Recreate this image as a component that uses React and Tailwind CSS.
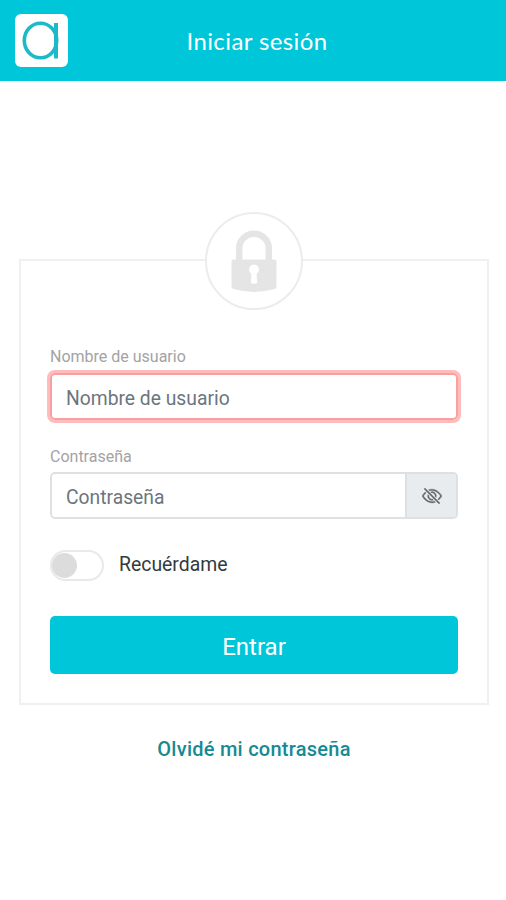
import { useState } from 'react';
import { BsEyeSlash, BsEye } from 'react-icons/bs';

function Logo() {
  return (
    <div className="w-[53px] h-[53px] bg-white rounded-[6px]">
      <svg viewBox="0 0 53 53" className="w-full h-full" fill="none" stroke="#1cb9c9">
        <ellipse cx="25.5" cy="26.5" rx="16.2" ry="17.3" strokeWidth="3.6" />
        <path d="M41 9V44.5" strokeWidth="4" />
      </svg>
    </div>
  );
}

function LockBadge() {
  return (
    <div className="absolute left-1/2 -top-[49px] -translate-x-1/2 w-[98px] h-[98px] rounded-full bg-white border-2 border-[#ececec]">
      <svg viewBox="0 0 94 94" className="w-full h-full">
        <path
          d="M32.2 50V34.5a14.8 14.8 0 0 1 29.6 0V50"
          fill="none"
          stroke="#e5e5e5"
          strokeWidth="6.5"
        />
        <path
          d="M26.500 45.500h41a2 2 0 0 1 2 2v25q0 2-2 2.600Q47 81 26.500 75.100q-2-.6-2-2.600v-25a2 2 0 0 1 2-2z"
          fill="#e5e5e5"
        />
        <path
          d="M47 50.500a5 5 0 0 1 2.600 9.200l.6 9.300q-3.200 1.600-6.400 0l.6-9.300A5 5 0 0 1 47 50.500z"
          fill="#fff"
        />
      </svg>
    </div>
  );
}

export default function App() {
  const [username, setUsername] = useState('');
  const [password, setPassword] = useState('');
  const [visible, setVisible] = useState(false);
  const [remember, setRemember] = useState(false);

  return (
    <div className="min-h-screen bg-white font-[Roboto,sans-serif]">
      <header className="grid grid-cols-[53px_1fr_45px] items-center h-[81px] px-[15px] bg-[#00c6d9]">
        <Logo />
        <h1 className="pt-px text-center text-[24px] tracking-[0.4px] text-white font-[Lato,sans-serif]">
          Iniciar sesión
        </h1>
      </header>

      <main className="pt-[178px] pl-[19px] pr-[17px]">
        <form
          onSubmit={(e) => e.preventDefault()}
          className="relative h-[446px] pt-[84px] px-[29px] border-2 border-[#f0f0f0]"
        >
          <LockBadge />

          <label htmlFor="username" className="block h-[28px] text-[16px] leading-[24px] text-[#a3a3a3]">
            Nombre de usuario
          </label>
          <input
            id="username"
            type="text"
            placeholder="Nombre de usuario"
            value={username}
            onChange={(e) => setUsername(e.target.value)}
            className="block w-full h-[47px] px-[14px] pt-[3px] text-[19.3px] text-[#495057] placeholder:text-[#6c757d] border-2 border-[#f99fa1] rounded-[5px] outline-none ring-3 ring-[#ffbcbc]"
          />

          <label htmlFor="password" className="block mt-[25px] h-[27px] text-[16px] leading-[24px] text-[#a3a3a3]">
            Contraseña
          </label>
          <div className="flex h-[47px] border-2 border-[#dee1e4] rounded-[5px] overflow-hidden">
            <input
              id="password"
              type={visible ? 'text' : 'password'}
              placeholder="Contraseña"
              value={password}
              onChange={(e) => setPassword(e.target.value)}
              className="flex-1 min-w-0 px-[14px] pt-[6px] text-[19.3px] text-[#495057] placeholder:text-[#6c757d] outline-none"
            />
            <button
              type="button"
              onClick={() => setVisible(!visible)}
              className="flex items-center justify-center w-[51px] bg-[#e9ecef] border-l-2 border-[#dee1e4] text-[#5f666d]"
            >
              {visible ? <BsEye size={20} /> : <BsEyeSlash size={20} strokeWidth={0.3} />}
            </button>
          </div>

          <div className="flex items-center mt-[31px] h-[31px]">
            <button
              type="button"
              role="switch"
              aria-checked={remember}
              onClick={() => setRemember(!remember)}
              className="w-[54px] h-[31px] rounded-full border-2 border-[#e9e9e9] bg-white"
            >
              <span
                className={`block w-[25px] h-[25px] rounded-full bg-[#dcdcdc] ${remember ? 'ml-auto' : ''}`}
              />
            </button>
            <span className="ml-[15px] pb-px text-[19.4px] text-[#333a40]">Recuérdame</span>
          </div>

          <button
            type="submit"
            className="block w-full h-[58px] mt-[35px] pt-[3px] rounded-[5px] bg-[#00c6d9] text-white text-[24px]"
          >
            Entrar
          </button>
        </form>

        <a href="#" className="block mt-[29px] text-center text-[20px] leading-[30px] tracking-[0.25px] font-medium text-[#158a94]">
          Olvidé mi contraseña
        </a>
      </main>
    </div>
  );
}
